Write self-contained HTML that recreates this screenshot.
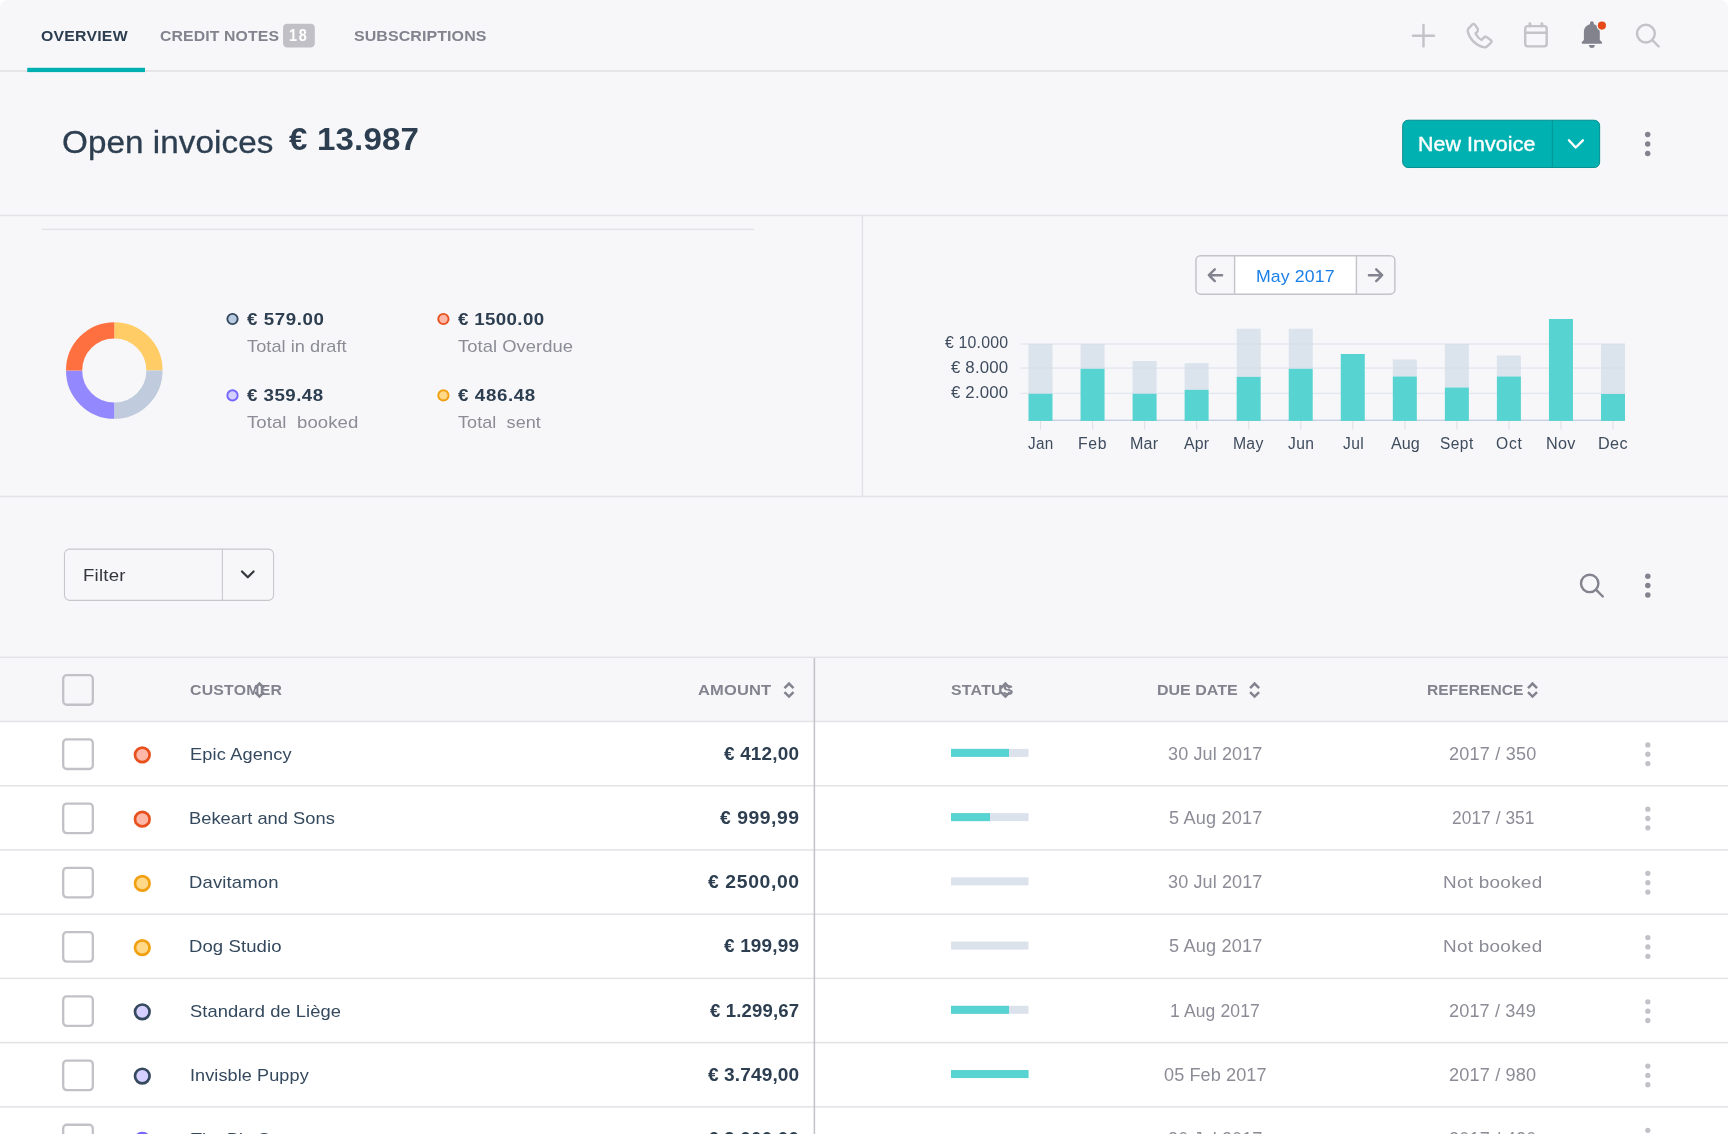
<!DOCTYPE html>
<html lang="en"><head><meta charset="utf-8"><title>Open invoices</title>
<style>
html,body{margin:0;padding:0}
body{width:1728px;height:1134px;overflow:hidden;background:#f7f7f9;position:relative;font-family:"Liberation Sans", Arial, sans-serif;}
.t{position:absolute;white-space:pre;line-height:1;transform-origin:0 0;}
</style></head><body>

<svg width="1728" height="1134" viewBox="0 0 1728 1134" style="position:absolute;left:0;top:0"><rect x="0.00" y="70.10" width="1728.00" height="1.90" fill="#e5e5e8"/>
<rect x="27.20" y="67.80" width="117.80" height="4.30" fill="#00b0b0"/>
<rect x="283.05" y="23.64" width="31.75" height="23.96" fill="#c1c0c6" rx="4.2"/>
<rect x="0.00" y="214.80" width="1728.00" height="1.40" fill="#e3e3e7"/>
<rect x="41.70" y="228.65" width="712.50" height="1.40" fill="#e3e3e7"/>
<rect x="861.70" y="216.00" width="1.40" height="280.00" fill="#e3e3e7"/>
<rect x="0.00" y="495.70" width="1728.00" height="1.50" fill="#e3e3e7"/>
<rect x="1402.70" y="120.22" width="196.95" height="47.30" rx="5.4" fill="#00b1b1" stroke="#008f8f" stroke-width="1"/>
<rect x="1551.85" y="120.20" width="1.00" height="47.40" fill="#009494"/>
<rect x="64.46" y="549.10" width="209.14" height="51.30" rx="5.3" fill="none" stroke="#c6c6cb" stroke-width="1.05"/>
<rect x="221.85" y="549.10" width="1.05" height="51.30" fill="#c6c6cb"/>
<rect x="1234.60" y="256.20" width="121.80" height="37.50" fill="#ffffff"/>
<rect x="1195.95" y="255.73" width="198.90" height="38.42" rx="4.6" fill="none" stroke="#c4c4ca" stroke-width="1.5"/>
<rect x="1233.90" y="255.73" width="1.40" height="38.42" fill="#c4c4ca"/>
<rect x="1355.70" y="255.73" width="1.40" height="38.42" fill="#c4c4ca"/>
<rect x="0.00" y="656.60" width="1728.00" height="1.40" fill="#e3e3e7"/>
<rect x="0.00" y="721.50" width="1728.00" height="420.00" fill="#ffffff"/>
<rect x="0.00" y="720.71" width="1728.00" height="1.50" fill="#e3e3e7"/>
<rect x="0.00" y="784.94" width="1728.00" height="1.50" fill="#e3e3e7"/>
<rect x="0.00" y="849.17" width="1728.00" height="1.50" fill="#e3e3e7"/>
<rect x="0.00" y="913.40" width="1728.00" height="1.50" fill="#e3e3e7"/>
<rect x="0.00" y="977.63" width="1728.00" height="1.50" fill="#e3e3e7"/>
<rect x="0.00" y="1041.86" width="1728.00" height="1.50" fill="#e3e3e7"/>
<rect x="0.00" y="1106.09" width="1728.00" height="1.50" fill="#e3e3e7"/>
<rect x="0.00" y="1170.32" width="1728.00" height="1.50" fill="#e3e3e7"/>
<rect x="813.60" y="658.00" width="1.55" height="480.00" fill="#c4c3c9"/>
<rect x="63.20" y="675.15" width="29.62" height="29.60" rx="3.6" fill="#f7f7f9" stroke="#c2c1c7" stroke-width="2.3"/>
<rect x="63.20" y="739.38" width="29.62" height="29.60" rx="3.6" fill="#ffffff" stroke="#c2c1c7" stroke-width="2.3"/>
<rect x="63.20" y="803.61" width="29.62" height="29.60" rx="3.6" fill="#ffffff" stroke="#c2c1c7" stroke-width="2.3"/>
<rect x="63.20" y="867.84" width="29.62" height="29.60" rx="3.6" fill="#ffffff" stroke="#c2c1c7" stroke-width="2.3"/>
<rect x="63.20" y="932.07" width="29.62" height="29.60" rx="3.6" fill="#ffffff" stroke="#c2c1c7" stroke-width="2.3"/>
<rect x="63.20" y="996.30" width="29.62" height="29.60" rx="3.6" fill="#ffffff" stroke="#c2c1c7" stroke-width="2.3"/>
<rect x="63.20" y="1060.53" width="29.62" height="29.60" rx="3.6" fill="#ffffff" stroke="#c2c1c7" stroke-width="2.3"/>
<rect x="63.20" y="1124.76" width="29.62" height="29.60" rx="3.6" fill="#ffffff" stroke="#c2c1c7" stroke-width="2.3"/>
<rect x="951.00" y="748.90" width="77.50" height="8.00" fill="#dce2ec"/>
<rect x="951.00" y="748.90" width="58.00" height="8.00" fill="#57d3d1"/>
<rect x="951.00" y="813.13" width="77.50" height="8.00" fill="#dce2ec"/>
<rect x="951.00" y="813.13" width="39.00" height="8.00" fill="#57d3d1"/>
<rect x="951.00" y="877.36" width="77.50" height="8.00" fill="#dce2ec"/>
<rect x="951.00" y="941.59" width="77.50" height="8.00" fill="#dce2ec"/>
<rect x="951.00" y="1005.82" width="77.50" height="8.00" fill="#dce2ec"/>
<rect x="951.00" y="1005.82" width="58.00" height="8.00" fill="#57d3d1"/>
<rect x="951.00" y="1070.05" width="77.50" height="8.00" fill="#dce2ec"/>
<rect x="951.00" y="1070.05" width="77.50" height="8.00" fill="#57d3d1"/>
<rect x="951.00" y="1134.28" width="77.50" height="8.00" fill="#dce2ec"/>
<rect x="951.00" y="1134.28" width="77.50" height="8.00" fill="#57d3d1"/>
<circle cx="142.300" cy="754.90" r="7.300" fill="#ffb8a8" stroke="#e8501e" stroke-width="2.700"/>
<circle cx="142.300" cy="819.13" r="7.300" fill="#ffb8a8" stroke="#e8501e" stroke-width="2.700"/>
<circle cx="142.300" cy="883.36" r="7.300" fill="#ffd888" stroke="#f0a010" stroke-width="2.700"/>
<circle cx="142.300" cy="947.59" r="7.300" fill="#ffd888" stroke="#f0a010" stroke-width="2.700"/>
<circle cx="142.300" cy="1011.82" r="7.300" fill="#d5d0ff" stroke="#34495e" stroke-width="2.700"/>
<circle cx="142.300" cy="1076.05" r="7.300" fill="#d5d0ff" stroke="#34495e" stroke-width="2.700"/>
<circle cx="142.300" cy="1140.28" r="7.300" fill="#d4d0ff" stroke="#7466ff" stroke-width="2.700"/>
<circle cx="232.50" cy="319.00" r="5.150" fill="#b9cbe0" stroke="#34495e" stroke-width="1.900"/>
<circle cx="443.40" cy="319.00" r="5.150" fill="#ffb8a8" stroke="#e8501e" stroke-width="1.900"/>
<circle cx="232.50" cy="395.40" r="5.150" fill="#d4d0ff" stroke="#7466ff" stroke-width="1.900"/>
<circle cx="443.40" cy="395.40" r="5.150" fill="#ffd888" stroke="#f0a010" stroke-width="1.900"/>
<path d="M114.30 330.30 A40.2 40.2 0 0 1 154.50 370.50" fill="none" stroke="#ffcc66" stroke-width="16.2"/>
<path d="M154.50 370.50 A40.2 40.2 0 0 1 114.30 410.70" fill="none" stroke="#c0ccdd" stroke-width="16.2"/>
<path d="M114.30 410.70 A40.2 40.2 0 0 1 74.10 370.50" fill="none" stroke="#9488ff" stroke-width="16.2"/>
<path d="M74.10 370.50 A40.2 40.2 0 0 1 114.30 330.30" fill="none" stroke="#ff7040" stroke-width="16.2"/>
<rect x="1020.500" y="343.25" width="604.500" height="1.500" fill="#e4e9f0"/>
<rect x="1020.500" y="367.35" width="604.500" height="1.500" fill="#e4e9f0"/>
<rect x="1020.500" y="392.65" width="604.500" height="1.500" fill="#e4e9f0"/>
<rect x="1028.300" y="419.600" width="596.700" height="1.400" fill="#c6d1e3"/>
<rect x="1028.50" y="344" width="24" height="49.75" fill="#d2dce8" fill-opacity="0.75"/>
<rect x="1028.50" y="393.75" width="24" height="27.15" fill="#57d3d1"/>
<rect x="1040.00" y="421" width="1.100" height="8.700" fill="#e0e1e6"/>
<rect x="1080.55" y="344" width="24" height="24.75" fill="#d2dce8" fill-opacity="0.75"/>
<rect x="1080.55" y="368.75" width="24" height="52.15" fill="#57d3d1"/>
<rect x="1092.05" y="421" width="1.100" height="8.700" fill="#e0e1e6"/>
<rect x="1132.59" y="361" width="24" height="32.75" fill="#d2dce8" fill-opacity="0.75"/>
<rect x="1132.59" y="393.75" width="24" height="27.15" fill="#57d3d1"/>
<rect x="1144.09" y="421" width="1.100" height="8.700" fill="#e0e1e6"/>
<rect x="1184.63" y="363.2" width="24" height="26.60" fill="#d2dce8" fill-opacity="0.75"/>
<rect x="1184.63" y="389.8" width="24" height="31.10" fill="#57d3d1"/>
<rect x="1196.13" y="421" width="1.100" height="8.700" fill="#e0e1e6"/>
<rect x="1236.68" y="328.7" width="24" height="48.15" fill="#d2dce8" fill-opacity="0.75"/>
<rect x="1236.68" y="376.85" width="24" height="44.05" fill="#57d3d1"/>
<rect x="1248.18" y="421" width="1.100" height="8.700" fill="#e0e1e6"/>
<rect x="1288.72" y="328.7" width="24" height="40.05" fill="#d2dce8" fill-opacity="0.75"/>
<rect x="1288.72" y="368.75" width="24" height="52.15" fill="#57d3d1"/>
<rect x="1300.22" y="421" width="1.100" height="8.700" fill="#e0e1e6"/>
<rect x="1340.77" y="354" width="24" height="66.90" fill="#57d3d1"/>
<rect x="1352.27" y="421" width="1.100" height="8.700" fill="#e0e1e6"/>
<rect x="1392.82" y="359.5" width="24" height="17.00" fill="#d2dce8" fill-opacity="0.75"/>
<rect x="1392.82" y="376.5" width="24" height="44.40" fill="#57d3d1"/>
<rect x="1404.32" y="421" width="1.100" height="8.700" fill="#e0e1e6"/>
<rect x="1444.86" y="344" width="24" height="43.50" fill="#d2dce8" fill-opacity="0.75"/>
<rect x="1444.86" y="387.5" width="24" height="33.40" fill="#57d3d1"/>
<rect x="1456.36" y="421" width="1.100" height="8.700" fill="#e0e1e6"/>
<rect x="1496.90" y="355.5" width="24" height="21.00" fill="#d2dce8" fill-opacity="0.75"/>
<rect x="1496.90" y="376.5" width="24" height="44.40" fill="#57d3d1"/>
<rect x="1508.40" y="421" width="1.100" height="8.700" fill="#e0e1e6"/>
<rect x="1548.95" y="319" width="24" height="101.90" fill="#57d3d1"/>
<rect x="1560.45" y="421" width="1.100" height="8.700" fill="#e0e1e6"/>
<rect x="1600.99" y="344" width="24" height="50.00" fill="#d2dce8" fill-opacity="0.75"/>
<rect x="1600.99" y="394" width="24" height="26.90" fill="#57d3d1"/>
<rect x="1612.49" y="421" width="1.100" height="8.700" fill="#e0e1e6"/>
<path d="M1423.5 25V46.400M1412.900 35.700H1434.100" stroke="#c3c3c8" stroke-width="2.400" stroke-linecap="round" fill="none"/>
<path d="M1469 28L1472.200 24.600Q1473.800 23 1475 24.800L1477.600 28.600Q1478.600 30.200 1477.400 31.600L1475.600 33.400Q1477.500 37.800 1481.600 40L1483.800 37.600Q1485.200 36.200 1486.900 37.300L1490.600 39.900Q1492.400 41.200 1490.900 42.800L1487.400 46.200Q1485.800 47.800 1483.400 47.200C1475.500 45.200 1469.500 39 1467.700 31.200Q1467.200 29.600 1469 28Z" fill="none" stroke="#c3c3c8" stroke-width="2.400" stroke-linejoin="round"/>
<g fill="none" stroke="#c3c3c8" stroke-width="2.400" stroke-linecap="round" stroke-linejoin="round"><rect x="1525.200" y="26.100" width="21.500" height="20.300" rx="2.600"/><path d="M1525.200 32.800H1546.700"/><path d="M1529.900 23.600V26M1541.900 23.600V26" stroke-width="2.800"/></g>
<path d="M1583.900 39.900V32C1583.900 27.600 1586.800 24.900 1590.100 24.200A2 2 0 1 1 1593.700 24.200C1597 24.900 1599.800 27.600 1599.800 32V39.900L1601.900 42A1 1 0 0 1 1601.200 43.700H1582.600A1 1 0 0 1 1581.900 42Z" fill="#83838e"/>
<path d="M1589 45.100H1594.800A2.900 2.900 0 0 1 1589 45.100Z" fill="#83838e"/>
<circle cx="1601.900" cy="25.600" r="5.300" fill="#f7f7f9"/>
<circle cx="1601.900" cy="25.600" r="4.050" fill="#e64a19"/>
<g fill="none" stroke="#c3c3c8" stroke-width="2.450" stroke-linecap="round"><circle cx="1645.900" cy="33.600" r="8.900"/><path d="M1652.400 40.100L1658.700 46.500"/></g>
<g fill="none" stroke="#83838f" stroke-width="2.4" stroke-linecap="round"><circle cx="1589.7" cy="583.4" r="8.7"/><path d="M1596.2 589.900L1602.800 596.500"/></g>
<circle cx="1647.7" cy="134.6" r="2.75" fill="#83838f"/>
<circle cx="1647.7" cy="144" r="2.75" fill="#83838f"/>
<circle cx="1647.7" cy="153.4" r="2.75" fill="#83838f"/>
<circle cx="1647.8" cy="576.3" r="2.75" fill="#83838f"/>
<circle cx="1647.8" cy="585.6" r="2.75" fill="#83838f"/>
<circle cx="1647.8" cy="595" r="2.75" fill="#83838f"/>
<circle cx="1647.850" cy="744.90" r="2.650" fill="#c1c1c7"/>
<circle cx="1647.850" cy="754.25" r="2.650" fill="#c1c1c7"/>
<circle cx="1647.850" cy="763.60" r="2.650" fill="#c1c1c7"/>
<circle cx="1647.850" cy="809.13" r="2.650" fill="#c1c1c7"/>
<circle cx="1647.850" cy="818.48" r="2.650" fill="#c1c1c7"/>
<circle cx="1647.850" cy="827.83" r="2.650" fill="#c1c1c7"/>
<circle cx="1647.850" cy="873.36" r="2.650" fill="#c1c1c7"/>
<circle cx="1647.850" cy="882.71" r="2.650" fill="#c1c1c7"/>
<circle cx="1647.850" cy="892.06" r="2.650" fill="#c1c1c7"/>
<circle cx="1647.850" cy="937.59" r="2.650" fill="#c1c1c7"/>
<circle cx="1647.850" cy="946.94" r="2.650" fill="#c1c1c7"/>
<circle cx="1647.850" cy="956.29" r="2.650" fill="#c1c1c7"/>
<circle cx="1647.850" cy="1001.82" r="2.650" fill="#c1c1c7"/>
<circle cx="1647.850" cy="1011.17" r="2.650" fill="#c1c1c7"/>
<circle cx="1647.850" cy="1020.52" r="2.650" fill="#c1c1c7"/>
<circle cx="1647.850" cy="1066.05" r="2.650" fill="#c1c1c7"/>
<circle cx="1647.850" cy="1075.40" r="2.650" fill="#c1c1c7"/>
<circle cx="1647.850" cy="1084.75" r="2.650" fill="#c1c1c7"/>
<circle cx="1647.850" cy="1130.28" r="2.650" fill="#c1c1c7"/>
<circle cx="1647.850" cy="1139.63" r="2.650" fill="#c1c1c7"/>
<circle cx="1647.850" cy="1148.98" r="2.650" fill="#c1c1c7"/>
<path d="M1568.900 140.300L1575.700 147.500L1582.900 140.300" fill="none" stroke="#fff" stroke-width="2.400" stroke-linecap="round" stroke-linejoin="round"/>
<path d="M242 571.500L247.800 577.300L253.600 571.500" fill="none" stroke="#33363d" stroke-width="2.200" stroke-linecap="round" stroke-linejoin="round"/>
<path d="M1222.100 275.200H1209M1214.800 269.300L1208.800 275.200L1214.800 281.100" fill="none" stroke="#83838f" stroke-width="2.400" stroke-linecap="round" stroke-linejoin="round"/>
<path d="M1368.900 275.200H1382M1376.200 269.300L1382.200 275.200L1376.200 281.100" fill="none" stroke="#83838f" stroke-width="2.400" stroke-linecap="round" stroke-linejoin="round"/>
<path d="M255.00 688.10L259.50 683.60L264.00 688.10M255.00 692.10L259.50 696.60L264.00 692.10" fill="none" stroke="#83838f" stroke-width="2.500" stroke-linejoin="miter"/>
<path d="M784.50 688.10L789.00 683.60L793.50 688.10M784.50 692.10L789.00 696.60L793.50 692.10" fill="none" stroke="#83838f" stroke-width="2.500" stroke-linejoin="miter"/>
<path d="M1000.90 688.10L1005.40 683.60L1009.90 688.10M1000.90 692.10L1005.40 696.60L1009.90 692.10" fill="none" stroke="#83838f" stroke-width="2.500" stroke-linejoin="miter"/>
<path d="M1250.10 688.10L1254.60 683.60L1259.10 688.10M1250.10 692.10L1254.60 696.60L1259.10 692.10" fill="none" stroke="#83838f" stroke-width="2.500" stroke-linejoin="miter"/>
<path d="M1528.00 688.10L1532.50 683.60L1537.00 688.10M1528.00 692.10L1532.50 696.60L1537.00 692.10" fill="none" stroke="#83838f" stroke-width="2.500" stroke-linejoin="miter"/>
<path d="M0 0H7A7 7 0 0 0 0 7Z" fill="#ffffff"/><path d="M1728 0H1721A7 7 0 0 1 1728 7Z" fill="#ffffff"/></svg>
<div style="position:absolute;left:0;top:0;width:1728px;height:1134px;will-change:transform">
<span class="t" style="left:41.41px;top:28.10px;font-size:15px;font-weight:700;color:#2c3e50;letter-spacing:0.211px;transform:scaleX(1.0551);">OVERVIEW</span>
<span class="t" style="left:160.41px;top:28.10px;font-size:15px;font-weight:700;color:#83838f;letter-spacing:0.123px;transform:scaleX(1.0522);">CREDIT NOTES</span>
<span class="t" style="left:289.46px;top:27.89px;font-size:15.6px;font-weight:700;color:#ffffff;letter-spacing:1.875px;transform:scaleX(0.9280);">18</span>
<span class="t" style="left:353.89px;top:28.10px;font-size:15px;font-weight:700;color:#83838f;letter-spacing:0.079px;transform:scaleX(1.0653);">SUBSCRIPTIONS</span>
<span class="t" style="left:62.06px;top:127.16px;font-size:31px;font-weight:400;color:#2c3e50;letter-spacing:0.076px;transform:scaleX(1.0711);-webkit-text-stroke:0.3px #2c3e50;">Open invoices</span>
<span class="t" style="left:289.40px;top:123.84px;font-size:31.5px;font-weight:700;color:#2c3e50;letter-spacing:0.158px;transform:scaleX(1.0500);">€ 13.987</span>
<span class="t" style="left:1417.96px;top:133.97px;font-size:20px;font-weight:400;color:#ffffff;letter-spacing:0.098px;transform:scaleX(1.0676);-webkit-text-stroke:0.4px #fff;">New Invoice</span>
<span class="t" style="left:246.97px;top:311.46px;font-size:17px;font-weight:700;color:#2c3e50;letter-spacing:0.540px;transform:scaleX(1.1000);">€ 579.00</span>
<span class="t" style="left:246.91px;top:338.41px;font-size:17px;font-weight:400;color:#8c8c97;letter-spacing:0.047px;transform:scaleX(1.0691);">Total in draft</span>
<span class="t" style="left:457.81px;top:311.41px;font-size:17px;font-weight:700;color:#2c3e50;letter-spacing:0.323px;transform:scaleX(1.1000);">€ 1500.00</span>
<span class="t" style="left:457.75px;top:338.41px;font-size:17px;font-weight:400;color:#8c8c97;letter-spacing:0.045px;transform:scaleX(1.0818);">Total Overdue</span>
<span class="t" style="left:247.00px;top:386.81px;font-size:17px;font-weight:700;color:#2c3e50;letter-spacing:0.430px;transform:scaleX(1.1000);">€ 359.48</span>
<span class="t" style="left:246.91px;top:413.81px;font-size:17px;font-weight:400;color:#8c8c97;letter-spacing:0.058px;transform:scaleX(1.0926);">Total  booked</span>
<span class="t" style="left:457.81px;top:386.81px;font-size:17px;font-weight:700;color:#2c3e50;letter-spacing:0.575px;transform:scaleX(1.1000);">€ 486.48</span>
<span class="t" style="left:457.76px;top:413.81px;font-size:17px;font-weight:400;color:#8c8c97;letter-spacing:0.062px;transform:scaleX(1.0609);">Total  sent</span>
<span class="t" style="left:1256.46px;top:268.21px;font-size:17px;font-weight:400;color:#1a7fe8;letter-spacing:0.115px;transform:scaleX(1.0409);">May 2017</span>
<span class="t" style="left:945.16px;top:335.49px;font-size:15.6px;font-weight:400;color:#3e4c5e;letter-spacing:0.181px;transform:scaleX(1.0159);">€ 10.000</span>
<span class="t" style="left:950.82px;top:359.59px;font-size:15.6px;font-weight:400;color:#3e4c5e;letter-spacing:0.153px;transform:scaleX(1.0792);">€ 8.000</span>
<span class="t" style="left:950.82px;top:384.99px;font-size:15.6px;font-weight:400;color:#3e4c5e;letter-spacing:0.153px;transform:scaleX(1.0792);">€ 2.000</span>
<span class="t" style="left:1027.95px;top:435.99px;font-size:15.6px;font-weight:400;color:#3e4c5e;letter-spacing:0.242px;transform:scaleX(0.9808);">Jan</span>
<span class="t" style="left:1078.28px;top:435.99px;font-size:15.6px;font-weight:400;color:#3e4c5e;letter-spacing:0.687px;transform:scaleX(1.0115);">Feb</span>
<span class="t" style="left:1130.31px;top:435.99px;font-size:15.6px;font-weight:400;color:#3e4c5e;letter-spacing:0.168px;transform:scaleX(1.0326);">Mar</span>
<span class="t" style="left:1184.38px;top:435.99px;font-size:15.6px;font-weight:400;color:#3e4c5e;letter-spacing:0.155px;transform:scaleX(1.0177);">Apr</span>
<span class="t" style="left:1233.17px;top:435.99px;font-size:15.6px;font-weight:400;color:#3e4c5e;letter-spacing:0.228px;transform:scaleX(1.0118);">May</span>
<span class="t" style="left:1288.47px;top:435.99px;font-size:15.6px;font-weight:400;color:#3e4c5e;letter-spacing:0.362px;transform:scaleX(1.0013);">Jun</span>
<span class="t" style="left:1342.78px;top:435.99px;font-size:15.6px;font-weight:400;color:#3e4c5e;letter-spacing:0.354px;transform:scaleX(1.0016);">Jul</span>
<span class="t" style="left:1390.82px;top:435.99px;font-size:15.6px;font-weight:400;color:#3e4c5e;letter-spacing:0.000px;transform:scaleX(1.0342);">Aug</span>
<span class="t" style="left:1439.77px;top:435.99px;font-size:15.6px;font-weight:400;color:#3e4c5e;letter-spacing:0.457px;transform:scaleX(0.9925);">Sept</span>
<span class="t" style="left:1495.95px;top:435.99px;font-size:15.6px;font-weight:400;color:#3e4c5e;letter-spacing:0.770px;transform:scaleX(1.0030);">Oct</span>
<span class="t" style="left:1545.67px;top:435.99px;font-size:15.6px;font-weight:400;color:#3e4c5e;letter-spacing:0.247px;transform:scaleX(1.0396);">Nov</span>
<span class="t" style="left:1597.74px;top:435.99px;font-size:15.6px;font-weight:400;color:#3e4c5e;letter-spacing:0.372px;transform:scaleX(1.0396);">Dec</span>
<span class="t" style="left:83.43px;top:566.81px;font-size:17px;font-weight:400;color:#33363d;letter-spacing:0.185px;transform:scaleX(1.0966);">Filter</span>
<span class="t" style="left:190.25px;top:682.40px;font-size:15px;font-weight:700;color:#83838f;letter-spacing:0.218px;transform:scaleX(1.0551);">CUSTOMER</span>
<span class="t" style="left:697.83px;top:682.40px;font-size:15px;font-weight:700;color:#83838f;letter-spacing:0.143px;transform:scaleX(1.1000);">AMOUNT</span>
<span class="t" style="left:950.65px;top:682.40px;font-size:15px;font-weight:700;color:#83838f;letter-spacing:0.249px;transform:scaleX(1.0577);">STATUS</span>
<span class="t" style="left:1156.63px;top:682.40px;font-size:15px;font-weight:700;color:#83838f;letter-spacing:0.000px;transform:scaleX(1.0664);">DUE DATE</span>
<span class="t" style="left:1426.73px;top:682.40px;font-size:15px;font-weight:700;color:#83838f;letter-spacing:0.045px;transform:scaleX(1.0382);">REFERENCE</span>
<span class="t" style="left:189.63px;top:746.26px;font-size:17px;font-weight:400;color:#34495e;letter-spacing:0.141px;transform:scaleX(1.0692);">Epic Agency</span>
<span class="t" style="left:724.01px;top:745.75px;font-size:17.6px;font-weight:700;color:#2c3e50;letter-spacing:0.155px;transform:scaleX(1.0771);">€ 412,00</span>
<span class="t" style="left:1168.40px;top:745.75px;font-size:17.6px;font-weight:400;color:#8c8c97;letter-spacing:0.102px;transform:scaleX(1.0256);">30 Jul 2017</span>
<span class="t" style="left:1449.40px;top:745.75px;font-size:17.6px;font-weight:400;color:#8c8c97;letter-spacing:0.204px;transform:scaleX(1.0255);">2017 / 350</span>
<span class="t" style="left:189.48px;top:810.49px;font-size:17px;font-weight:400;color:#34495e;letter-spacing:0.036px;transform:scaleX(1.0752);">Bekeart and Sons</span>
<span class="t" style="left:720.01px;top:809.98px;font-size:17.6px;font-weight:700;color:#2c3e50;letter-spacing:0.465px;transform:scaleX(1.1000);">€ 999,99</span>
<span class="t" style="left:1168.59px;top:809.98px;font-size:17.6px;font-weight:400;color:#8c8c97;letter-spacing:0.158px;transform:scaleX(1.0312);">5 Aug 2017</span>
<span class="t" style="left:1451.68px;top:809.98px;font-size:17.6px;font-weight:400;color:#8c8c97;letter-spacing:0.069px;transform:scaleX(0.9833);">2017 / 351</span>
<span class="t" style="left:189.45px;top:873.72px;font-size:17px;font-weight:400;color:#34495e;letter-spacing:0.133px;transform:scaleX(1.0864);">Davitamon</span>
<span class="t" style="left:708.01px;top:874.21px;font-size:17.6px;font-weight:700;color:#2c3e50;letter-spacing:0.560px;transform:scaleX(1.1000);">€ 2500,00</span>
<span class="t" style="left:1168.40px;top:874.21px;font-size:17.6px;font-weight:400;color:#8c8c97;letter-spacing:0.102px;transform:scaleX(1.0256);">30 Jul 2017</span>
<span class="t" style="left:1443.40px;top:873.55px;font-size:17.2px;font-weight:400;color:#8c8c97;letter-spacing:0.250px;transform:scaleX(1.1000);">Not booked</span>
<span class="t" style="left:189.44px;top:937.95px;font-size:17px;font-weight:400;color:#34495e;letter-spacing:0.070px;transform:scaleX(1.0913);">Dog Studio</span>
<span class="t" style="left:724.01px;top:938.44px;font-size:17.6px;font-weight:700;color:#2c3e50;letter-spacing:0.153px;transform:scaleX(1.0771);">€ 199,99</span>
<span class="t" style="left:1168.59px;top:938.44px;font-size:17.6px;font-weight:400;color:#8c8c97;letter-spacing:0.158px;transform:scaleX(1.0312);">5 Aug 2017</span>
<span class="t" style="left:1443.40px;top:937.78px;font-size:17.2px;font-weight:400;color:#8c8c97;letter-spacing:0.250px;transform:scaleX(1.1000);">Not booked</span>
<span class="t" style="left:189.69px;top:1003.18px;font-size:17px;font-weight:400;color:#34495e;letter-spacing:0.062px;transform:scaleX(1.0788);">Standard de Liège</span>
<span class="t" style="left:710.01px;top:1002.67px;font-size:17.6px;font-weight:700;color:#2c3e50;letter-spacing:0.139px;transform:scaleX(1.0555);">€ 1.299,67</span>
<span class="t" style="left:1169.79px;top:1002.67px;font-size:17.6px;font-weight:400;color:#8c8c97;letter-spacing:0.116px;transform:scaleX(0.9975);">1 Aug 2017</span>
<span class="t" style="left:1449.40px;top:1002.67px;font-size:17.6px;font-weight:400;color:#8c8c97;letter-spacing:0.104px;transform:scaleX(1.0319);">2017 / 349</span>
<span class="t" style="left:190.02px;top:1067.41px;font-size:17px;font-weight:400;color:#34495e;letter-spacing:0.075px;transform:scaleX(1.0639);">Invisble Puppy</span>
<span class="t" style="left:707.80px;top:1066.90px;font-size:17.6px;font-weight:700;color:#2c3e50;letter-spacing:0.091px;transform:scaleX(1.0855);">€ 3.749,00</span>
<span class="t" style="left:1164.12px;top:1066.90px;font-size:17.6px;font-weight:400;color:#8c8c97;letter-spacing:0.077px;transform:scaleX(1.0304);">05 Feb 2017</span>
<span class="t" style="left:1448.60px;top:1066.90px;font-size:17.6px;font-weight:400;color:#8c8c97;letter-spacing:0.151px;transform:scaleX(1.0315);">2017 / 980</span>
<span class="t" style="left:190.76px;top:1130.64px;font-size:17px;font-weight:400;color:#34495e;letter-spacing:0.046px;transform:scaleX(1.0533);">The Big Store</span>
<span class="t" style="left:707.80px;top:1131.13px;font-size:17.6px;font-weight:700;color:#2c3e50;letter-spacing:0.091px;transform:scaleX(1.0855);">€ 2.000,00</span>
<span class="t" style="left:1168.40px;top:1131.13px;font-size:17.6px;font-weight:400;color:#8c8c97;letter-spacing:0.102px;transform:scaleX(1.0256);">30 Jul 2017</span>
<span class="t" style="left:1449.40px;top:1131.13px;font-size:17.6px;font-weight:400;color:#8c8c97;letter-spacing:0.204px;transform:scaleX(1.0255);">2017 / 420</span>
</div>
</body></html>
